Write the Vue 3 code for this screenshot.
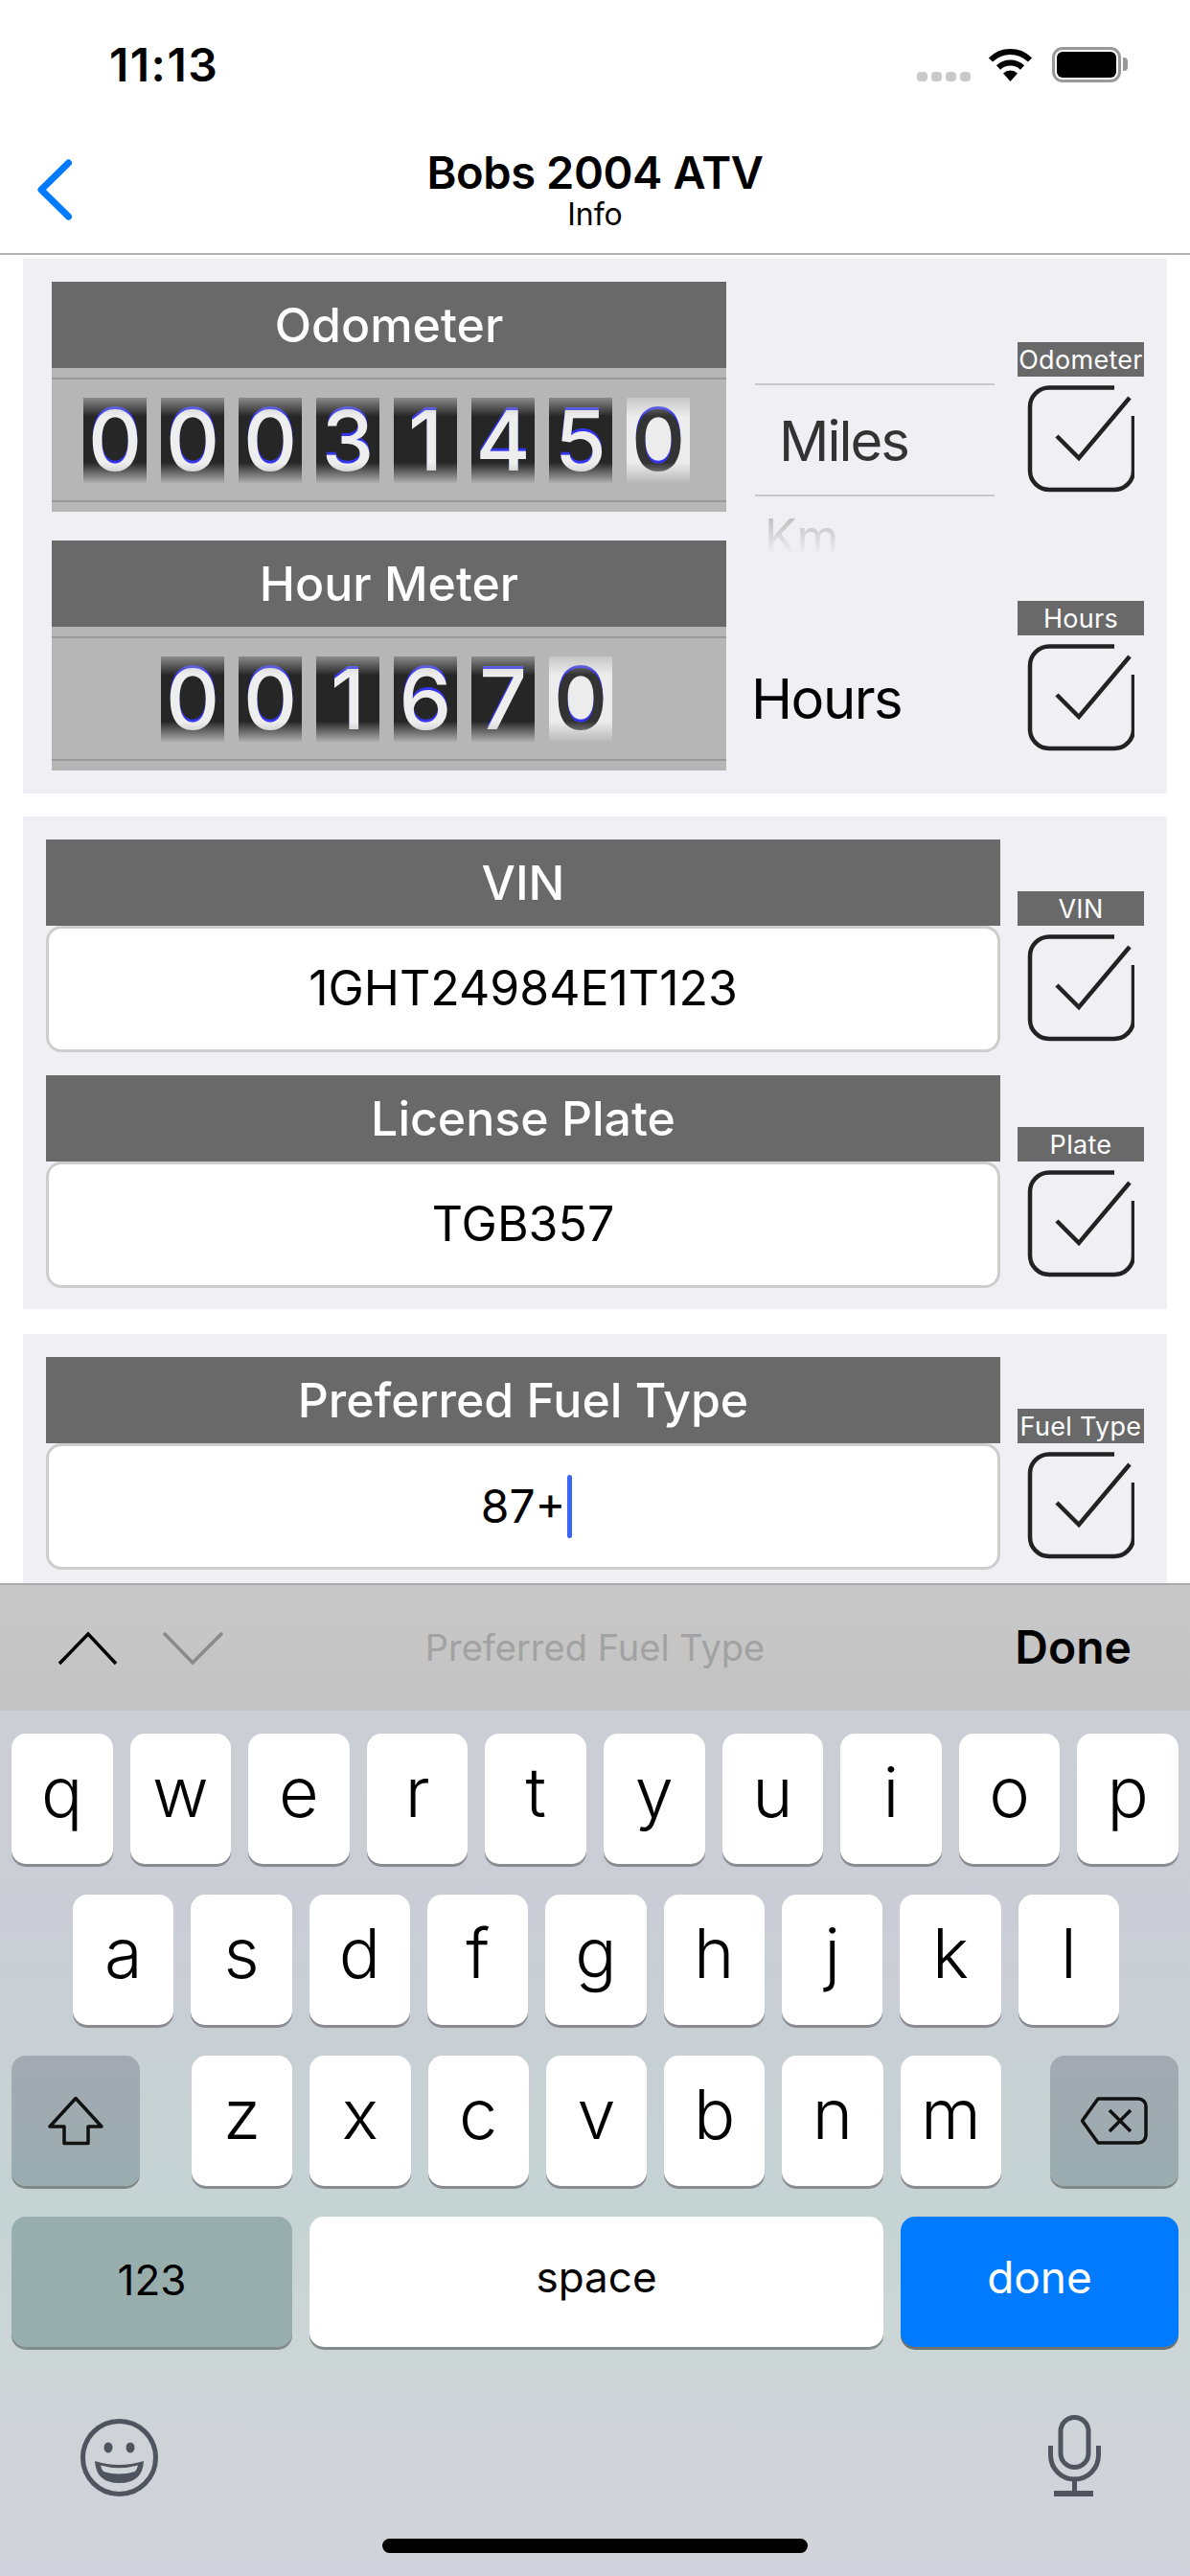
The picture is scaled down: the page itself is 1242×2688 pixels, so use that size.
<script setup>
const meters = [
  { title: 'Odometer', digits: ['0','0','0','3','1','4','5'], last: '0' },
  { title: 'Hour Meter', digits: ['0','0','1','6','7'], last: '0' },
]
const row1 = 'qwertyuiop'.split('')
const row2 = 'asdfghjkl'.split('')
const row3 = 'zxcvbnm'.split('')
</script>

<template>
  <div class="app">
    <header class="status">
      <span class="time">11:13</span>
      <div class="status-icons">
        <div class="signal"><i></i><i></i><i></i><i></i></div>
        <svg class="wifi" width="47" height="36" viewBox="0 0 47 36">
          <path d="M3 13.5A29 29 0 0 1 44 13.5" fill="none" stroke="#000" stroke-width="6" />
          <path d="M11 21.5A18 18 0 0 1 36 21.5" fill="none" stroke="#000" stroke-width="6" />
          <path d="M23.5 36L16 27.5A11 11 0 0 1 31 27.5Z" fill="#000" />
        </svg>
        <div class="battery"><div class="battery-fill"></div></div>
        <div class="battery-nub"></div>
      </div>
    </header>

    <nav class="nav">
      <svg class="back" width="38" height="64" viewBox="0 0 38 64">
        <path d="M33.5 4L5 32L33.5 60" fill="none" stroke="#007aff" stroke-width="7" stroke-linecap="round" stroke-linejoin="round" />
      </svg>
      <div class="nav-title">Bobs 2004 ATV</div>
      <div class="nav-sub">Info</div>
    </nav>

    <main class="content">
      <section class="card card-meters">
        <div class="meter-row">
          <div class="meter">
            <div class="band-title">{{ meters[0].title }}</div>
            <div class="meter-body">
              <span v-for="(d, i) in meters[0].digits" :key="i" class="digit">{{ d }}</span>
              <span class="digit digit-last">{{ meters[0].last }}</span>
            </div>
          </div>
          <div class="picker">
            <div class="picker-sel">Miles</div>
            <div class="picker-next">Km</div>
          </div>
          <div class="check-col meter-check">
            <div class="check-label">Odometer</div>
            <svg class="check" width="112" height="112" viewBox="0 0 112 112">
              <path d="M91 2.5H23A20 20 0 0 0 3 22.5V89A20 20 0 0 0 23 109H91A20 20 0 0 0 111 89V32" fill="none" stroke="#222" stroke-width="4.5" />
              <path d="M31 53L54 76L107 13" fill="none" stroke="#222" stroke-width="4.5" />
            </svg>
          </div>
        </div>
        <div class="meter-row">
          <div class="meter">
            <div class="band-title">{{ meters[1].title }}</div>
            <div class="meter-body">
              <span v-for="(d, i) in meters[1].digits" :key="i" class="digit">{{ d }}</span>
              <span class="digit digit-last">{{ meters[1].last }}</span>
            </div>
          </div>
          <div class="hours">Hours</div>
          <div class="check-col meter-check">
            <div class="check-label">Hours</div>
            <svg class="check" width="112" height="112" viewBox="0 0 112 112">
              <path d="M91 2.5H23A20 20 0 0 0 3 22.5V89A20 20 0 0 0 23 109H91A20 20 0 0 0 111 89V32" fill="none" stroke="#222" stroke-width="4.5" />
              <path d="M31 53L54 76L107 13" fill="none" stroke="#222" stroke-width="4.5" />
            </svg>
          </div>
        </div>
      </section>

      <section class="card card-fields card-plate">
        <div class="field-row">
          <div class="field">
            <div class="band-title">VIN</div>
            <div class="input">1GHT24984E1T123</div>
          </div>
          <div class="check-col">
            <div class="check-label">VIN</div>
            <svg class="check" width="112" height="112" viewBox="0 0 112 112">
              <path d="M91 2.5H23A20 20 0 0 0 3 22.5V89A20 20 0 0 0 23 109H91A20 20 0 0 0 111 89V32" fill="none" stroke="#222" stroke-width="4.5" />
              <path d="M31 53L54 76L107 13" fill="none" stroke="#222" stroke-width="4.5" />
            </svg>
          </div>
        </div>
        <div class="field-row">
          <div class="field">
            <div class="band-title">License Plate</div>
            <div class="input">TGB357</div>
          </div>
          <div class="check-col">
            <div class="check-label">Plate</div>
            <svg class="check" width="112" height="112" viewBox="0 0 112 112">
              <path d="M91 2.5H23A20 20 0 0 0 3 22.5V89A20 20 0 0 0 23 109H91A20 20 0 0 0 111 89V32" fill="none" stroke="#222" stroke-width="4.5" />
              <path d="M31 53L54 76L107 13" fill="none" stroke="#222" stroke-width="4.5" />
            </svg>
          </div>
        </div>
      </section>

      <section class="card card-fields">
        <div class="field-row">
          <div class="field">
            <div class="band-title">Preferred Fuel Type</div>
            <div class="input input-active">87+<span class="cursor"></span></div>
          </div>
          <div class="check-col">
            <div class="check-label">Fuel Type</div>
            <svg class="check" width="112" height="112" viewBox="0 0 112 112">
              <path d="M91 2.5H23A20 20 0 0 0 3 22.5V89A20 20 0 0 0 23 109H91A20 20 0 0 0 111 89V32" fill="none" stroke="#222" stroke-width="4.5" />
              <path d="M31 53L54 76L107 13" fill="none" stroke="#222" stroke-width="4.5" />
            </svg>
          </div>
        </div>
      </section>
    </main>

    <div class="toolbar">
      <svg class="tool-chevrons" width="175" height="36" viewBox="0 0 175 36">
        <path d="M2 34L32 3L61 34" fill="none" stroke="#000" stroke-width="3.5" />
        <path d="M111 2L141 33L172 2" fill="none" stroke="#8a8a8a" stroke-width="3.5" />
      </svg>
      <div class="tool-title">Preferred Fuel Type</div>
      <div class="tool-done">Done</div>
    </div>

    <div class="keyboard">
      <div class="key-row">
        <div v-for="k in row1" :key="k" class="key letter">{{ k }}</div>
      </div>
      <div class="key-row row-mid">
        <div v-for="k in row2" :key="k" class="key letter">{{ k }}</div>
      </div>
      <div class="key-row">
        <div class="key special shift">
          <svg width="60" height="52" viewBox="0 0 60 52">
            <path d="M30 2.5L57 32H43V49.5H18V32H3Z" fill="none" stroke="#111" stroke-width="3.5" stroke-linejoin="round" />
          </svg>
        </div>
        <div class="letters-third">
          <div v-for="k in row3" :key="k" class="key letter">{{ k }}</div>
        </div>
        <div class="key special shift">
          <svg width="70" height="52" viewBox="0 0 70 52">
            <path d="M1.5 26L18 3H60A8 8 0 0 1 68 11V41A8 8 0 0 1 60 49H18Z" fill="none" stroke="#111" stroke-width="3.5" stroke-linejoin="round" />
            <path d="M30 15L52 37M52 15L30 37" fill="none" stroke="#111" stroke-width="3.5" />
          </svg>
        </div>
      </div>
      <div class="key-row">
        <div class="key wide num">123</div>
        <div class="key wide space">space</div>
        <div class="key wide go">done</div>
      </div>
      <div class="kb-bottom">
        <svg class="emoji" width="81" height="81" viewBox="0 0 81 81">
          <circle cx="40.5" cy="40.5" r="38" fill="none" stroke="#50545f" stroke-width="5" />
          <ellipse cx="29" cy="30" rx="4.5" ry="5.5" fill="#50545f" />
          <ellipse cx="52" cy="30" rx="4.5" ry="5.5" fill="#50545f" />
          <path d="M15 44Q40 52 66 44Q65 67 40.5 67Q16 67 15 44Z" fill="#50545f" />
          <path d="M21 48.5Q40 54 60 48.5Q59 53 57 55Q40 60 24 55Q22 53 21 48.5Z" fill="#cfd4d8" />
        </svg>
        <svg class="mic" width="55" height="85" viewBox="0 0 55 85">
          <rect x="13" y="2.5" width="29" height="52" rx="14.5" fill="none" stroke="#50545f" stroke-width="5" />
          <path d="M2.5 32V42A25 25 0 0 0 52.5 42V32" fill="none" stroke="#50545f" stroke-width="5" />
          <path d="M27.5 67V80" stroke="#50545f" stroke-width="5" />
          <rect x="6" y="79" width="41" height="6" fill="#50545f" />
        </svg>
      </div>
      <div class="home-bar"></div>
    </div>
  </div>
</template>

<style scoped>
.app {
  width: 1242px;
  height: 2688px;
  display: flex;
  flex-direction: column;
  overflow: hidden;
  background: #fff;
  color: #000;
  font-family: Inter, "Liberation Sans", sans-serif;
}

.status {
  height: 132px;
  box-sizing: border-box;
  padding: 38px 65px 0 114px;
  display: flex;
  justify-content: space-between;
  align-items: flex-start;
}
.time {
  font-size: 48px;
  line-height: 60px;
  font-weight: 600;
  letter-spacing: 1.5px;
}
.status-icons {
  display: flex;
  align-items: flex-start;
  padding-top: 11px;
}
.signal {
  display: flex;
  gap: 4px;
  margin-top: 26px;
  margin-right: 18px;
}
.signal i {
  display: block;
  width: 11px;
  height: 10px;
  border-radius: 4px;
  background: #c9c9c9;
}
.wifi {
  margin-right: 20px;
}
.battery {
  width: 72px;
  height: 37px;
  box-sizing: border-box;
  border: 3px solid #999;
  border-radius: 11px;
  padding: 2px;
}
.battery-fill {
  height: 100%;
  background: #000;
  border-radius: 6px;
}
.battery-nub {
  width: 5px;
  height: 14px;
  margin-top: 11px;
  margin-left: 2px;
  background: #999;
  border-radius: 0 4px 4px 0;
}

.nav {
  position: relative;
  height: 134px;
  box-sizing: border-box;
  border-bottom: 2px solid #b2b2b2;
  display: flex;
  flex-direction: column;
  align-items: center;
  padding-top: 23px;
}
.back {
  position: absolute;
  left: 38px;
  top: 34px;
}
.nav-title {
  font-size: 47px;
  line-height: 50px;
  font-weight: 600;
  letter-spacing: -0.4px;
}
.nav-sub {
  font-size: 32px;
  line-height: 38px;
}

.content {
  height: 1386px;
  overflow: hidden;
  padding: 4px 24px 0;
  box-sizing: border-box;
  display: flex;
  flex-direction: column;
}
.card {
  background: #efeff4;
  flex-shrink: 0;
}
.card-meters {
  padding: 24px 24px 24px 30px;
  display: flex;
  flex-direction: column;
  gap: 30px;
  margin-bottom: 24px;
}
.meter-row {
  display: flex;
  height: 240px;
}
.meter {
  width: 704px;
  flex-shrink: 0;
}
.band-title {
  height: 90px;
  background: #696969;
  color: #fff;
  font-size: 50px;
  line-height: 90px;
  font-weight: 500;
  text-align: center;
}
.meter-body {
  height: 150px;
  display: flex;
  justify-content: center;
  gap: 15px;
  align-items: center;
  padding-right: 5px;
  background:
    linear-gradient(#999, #999) 0 10px / 100% 2px no-repeat,
    linear-gradient(#999, #999) 0 138px / 100% 2px no-repeat,
    #b6b6b6;
}
.digit {
  position: relative;
  width: 66px;
  height: 89px;
  background: #262626;
  color: #eee;
  font-size: 87px;
  line-height: 89px;
  font-weight: 500;
  text-align: center;
  text-shadow: 0 -3px 0 #3535ee;
}
.digit::after {
  content: "";
  position: absolute;
  inset: 0;
  background: linear-gradient(
    180deg,
    rgba(182, 182, 182, 0.7) 0,
    rgba(182, 182, 182, 0) 22%,
    rgba(182, 182, 182, 0) 76%,
    rgba(182, 182, 182, 0.95) 100%
  );
}
.digit-last {
  background: #ececec;
  color: #333;
}

.picker {
  width: 250px;
  margin-left: 30px;
  padding-top: 106px;
}
.picker-sel {
  height: 118px;
  box-sizing: border-box;
  border-top: 2px solid #c8c7cc;
  border-bottom: 2px solid #c8c7cc;
  padding-left: 25px;
  font-size: 58px;
  line-height: 116px;
  letter-spacing: -2px;
  color: #333;
}
.picker-next {
  height: 60px;
  overflow: hidden;
  padding-left: 10px;
  font-size: 50px;
  line-height: 84px;
  color: #bbb;
  -webkit-mask-image: linear-gradient(180deg, #000 30%, transparent 100%);
  mask-image: linear-gradient(180deg, #000 30%, transparent 100%);
}
.hours {
  width: 254px;
  margin-left: 26px;
  align-self: flex-end;
  margin-bottom: 40px;
  font-size: 58px;
  line-height: 70px;
  letter-spacing: -1.5px;
}

.check-col {
  width: 132px;
  display: flex;
  flex-direction: column;
  align-items: center;
  margin-left: 18px;
}
.meter-check {
  margin-left: 24px;
  justify-content: flex-end;
  padding-bottom: 20px;
}
.field-row .check-col {
  padding-top: 54px;
}
.check-label {
  width: 132px;
  height: 36px;
  background: #696969;
  color: #fff;
  font-size: 27px;
  line-height: 38px;
  letter-spacing: 0.3px;
  text-align: center;
  white-space: nowrap;
}
.check {
  display: block;
  margin-top: 9px;
}

.card-fields {
  padding: 24px 24px 22px;
}
.card-plate {
  margin-bottom: 26px;
  display: flex;
  flex-direction: column;
  gap: 24px;
}
.field-row {
  display: flex;
}
.field {
  width: 996px;
  flex-shrink: 0;
}
.input {
  height: 132px;
  box-sizing: border-box;
  background: #fff;
  border: 3px solid #cdcdcd;
  border-radius: 16px;
  display: flex;
  align-items: center;
  justify-content: center;
  font-size: 50px;
  line-height: 60px;
  padding-bottom: 2px;
}
.input-active {
  font-size: 48px;
  padding-bottom: 0;
}
.cursor {
  width: 5px;
  height: 66px;
  background: #3b66f5;
  border-radius: 3px;
  margin-left: 2px;
  margin-right: -7px;
}

.toolbar {
  height: 133px;
  box-sizing: border-box;
  border-top: 2px solid #a9a9ac;
  background: linear-gradient(180deg, #c8c8c8, #c3c3c3);
  position: relative;
  display: flex;
  align-items: center;
  justify-content: center;
  padding-bottom: 1px;
}
.tool-chevrons {
  position: absolute;
  left: 60px;
  top: 48px;
}
.tool-title {
  font-size: 38px;
  color: #a2a2a2;
}
.tool-done {
  position: absolute;
  right: 61px;
  top: 37px;
  font-size: 48px;
  line-height: 56px;
  font-weight: 600;
}

.keyboard {
  flex: 1;
  position: relative;
  background: linear-gradient(
    180deg,
    #cbced4 0,
    #cacdd5 220px,
    #c5d3d3 510px,
    #cdd6d6 680px,
    #cfd3d8 760px,
    #d0d3db 100%
  );
  padding: 24px 12px 0;
  box-sizing: border-box;
  display: flex;
  flex-direction: column;
}
.key-row {
  display: flex;
  gap: 18px;
  height: 136px;
  margin-bottom: 32px;
}
.row-mid {
  padding: 0 62px 0 64px;
}
.letters-third {
  display: flex;
  gap: 18px;
  flex: 1;
  width: 0;
  padding: 0 33px 0 36px;
}
.key {
  flex: 1;
  min-width: 0;
  border-radius: 15px;
  background: #fff;
  box-shadow: 0 3px 0 #898b90;
  display: flex;
  align-items: center;
  justify-content: center;
}
.letter {
  font-size: 72px;
  font-weight: 300;
  line-height: 84px;
  padding-bottom: 14px;
  box-sizing: border-box;
}
.special {
  flex: 0 0 134px;
}
.shift {
  background: linear-gradient(180deg, #a3a9b2, #9aadb0);
  box-shadow: 0 3px 0 #7f8686;
}
.wide {
  font-size: 44px;
  box-shadow: 0 3px 0 #828c8c;
  box-sizing: border-box;
}
.num {
  flex: 0 0 293px;
  background: #98aead;
  padding-bottom: 4px;
}
.space {
  flex: 1;
  padding-bottom: 10px;
}
.go {
  flex: 0 0 290px;
  background: #007aff;
  color: #fff;
  box-shadow: 0 3px 0 #6b7272;
  padding-bottom: 10px;
  font-size: 46px;
}
.kb-bottom {
  display: flex;
  justify-content: space-between;
  align-items: flex-end;
  padding: 0 81px 0 72px;
  margin-top: 39px;
}
.home-bar {
  position: absolute;
  left: 399px;
  top: 864px;
  width: 444px;
  height: 15px;
  border-radius: 8px;
  background: #000;
}
</style>
